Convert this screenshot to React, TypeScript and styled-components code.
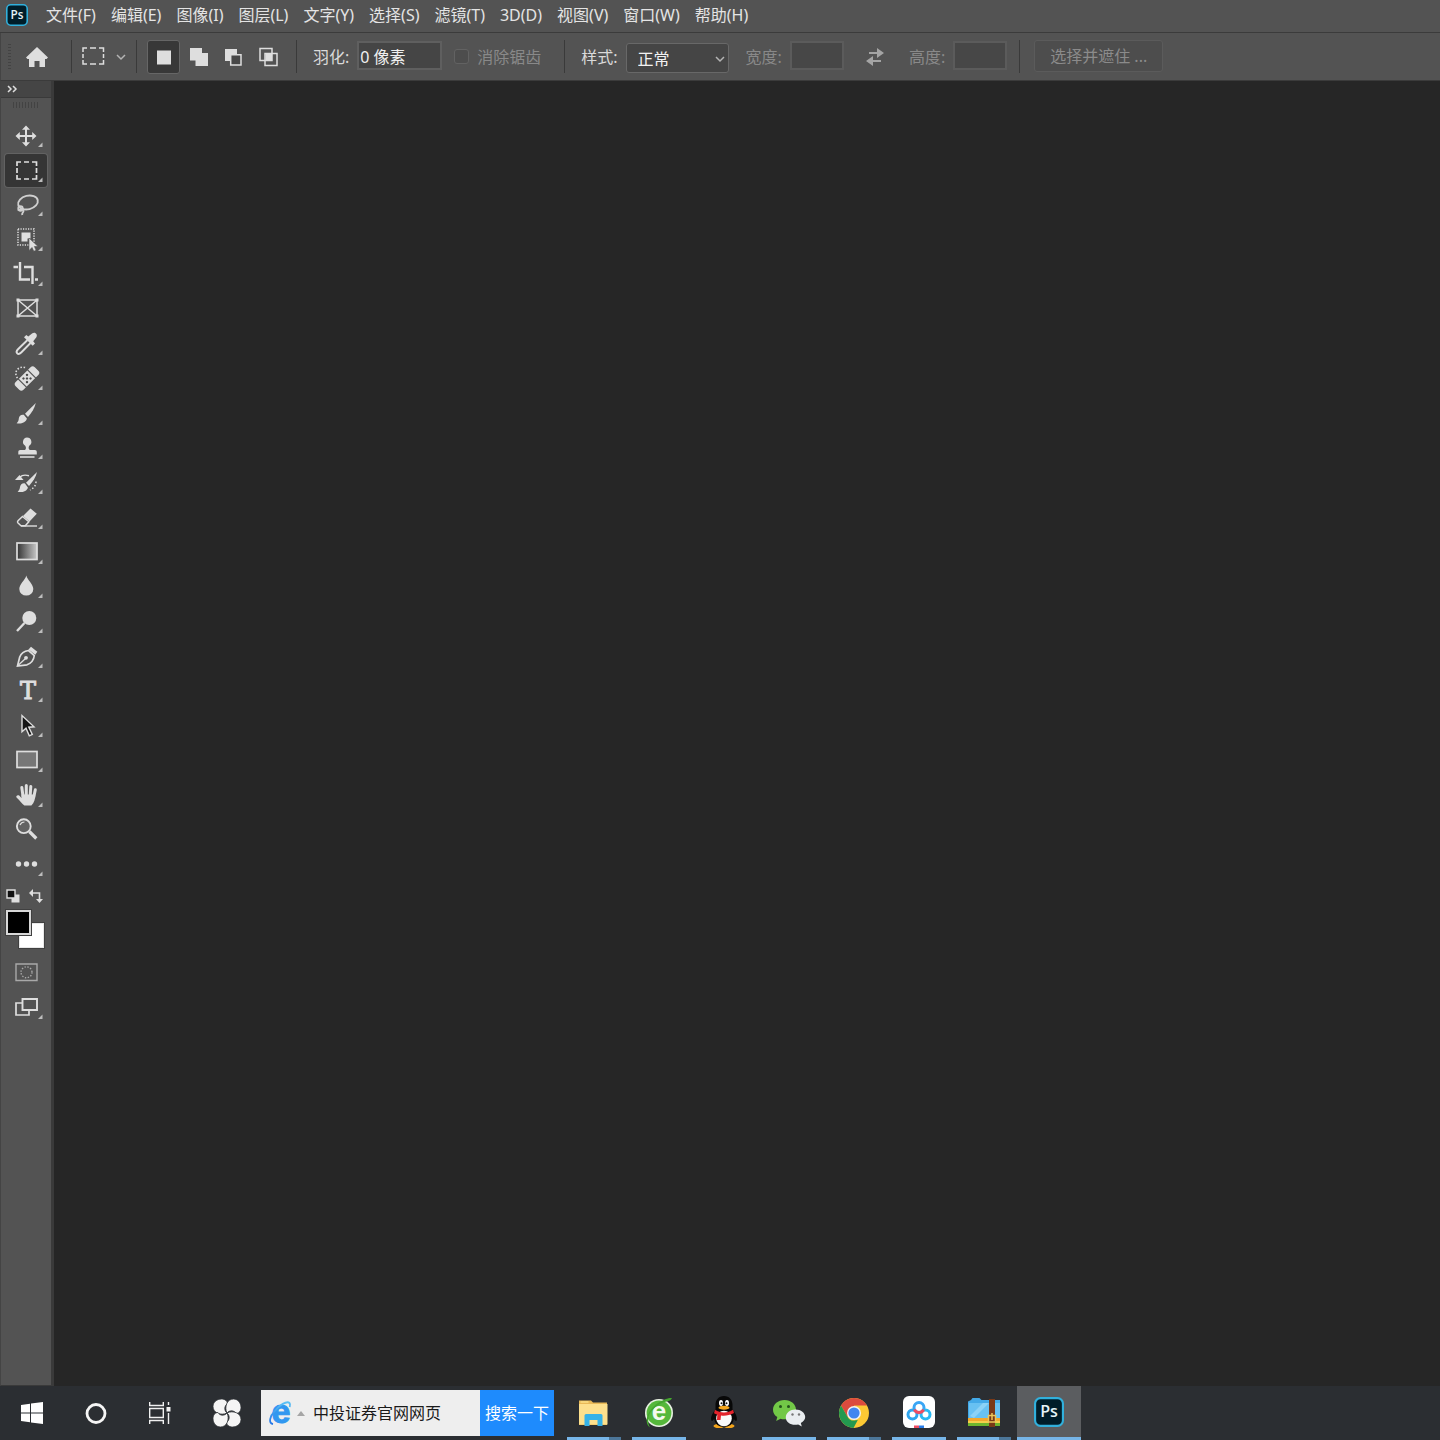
import React from "react";
import styled, { createGlobalStyle, css } from "styled-components";

const GlobalStyle = createGlobalStyle`
  *, *::before, *::after {
    box-sizing: border-box;
  }

  body {
    margin: 0;
    background: #262626;
  }

  body, button, input, select {
    font-family: "Noto Sans", "Noto Sans CJK SC", sans-serif;
    font-size: 16px;
  }

  button {
    padding: 0;
    border: 0;
    background: none;
    color: inherit;
  }

  svg {
    display: block;
    flex: none;
  }
`;

const Page = styled.div`
  min-height: 100vh;
  display: flex;
  flex-direction: column;
  color: #e4e4e4;
  user-select: none;
`;

const MenuBar = styled.nav`
  display: flex;
  align-items: center;
  gap: 15px;
  height: 33px;
  padding: 0 6px 2px;
  background: #535353;
  border-bottom: 1px solid #3b3b3b;
`;

const AppLogo = styled.div`
  display: flex;
  width: 25px;
`;

const MenuItem = styled.button`
  line-height: 24px;
  white-space: nowrap;
`;

const OptionsBar = styled.div`
  display: flex;
  align-items: center;
  height: 48px;
  padding-left: 7px;
  background: #535353;
  border-left: 1px solid #444444;
  border-bottom: 1px solid #3b3b3b;
`;

const Grip = styled.div<{ $wide?: boolean }>`
  flex: none;
  ${({ $wide }) =>
    $wide
      ? css`
          width: 27px;
          height: 6px;
          margin: 4px auto 10px;
          background: repeating-linear-gradient(to right, #434343 0 1px, #535353 1px 3px);
        `
      : css`
          width: 3px;
          height: 26px;
          background: repeating-linear-gradient(to bottom, #434343 0 1px, #535353 1px 3px);
        `}
`;

const Separator = styled.span`
  flex: none;
  width: 1px;
  height: 33px;
  background: #3a3a3a;
`;

const HomeButton = styled.button`
  display: flex;
  justify-content: center;
  width: 60px;
  padding-right: 8px;
`;

const PresetButton = styled.button`
  display: flex;
  align-items: center;
  gap: 11px;
  width: 64px;
  padding-left: 10px;
`;

const ModeGroup = styled.div`
  display: flex;
  gap: 2px;
  margin: 0 11px 0 10px;
`;

const ModeButton = styled.button<{ $active?: boolean }>`
  display: grid;
  place-items: center;
  width: 33px;
  height: 34px;
  border-radius: 3px;
  background: ${({ $active }) => ($active ? "#383838" : "transparent")};
  border: 1px solid ${({ $active }) => ($active ? "#666666" : "transparent")};
`;

const Field = styled.div<{ $dim?: boolean }>`
  display: flex;
  align-items: center;
  gap: 8px;
  margin-left: ${({ $dim }) => ($dim ? 17 : 16)}px;
  color: ${({ $dim }) => ($dim ? "#898989" : "#dadada")};

  label {
    line-height: 24px;
    white-space: nowrap;
  }
`;

const TextBox = styled.input<{ $width: number }>`
  width: ${({ $width }) => $width}px;
  height: 29px;
  margin-bottom: 2px;
  padding: 0 1px;
  border: 2px solid #5f5f5f;
  background: #454545;
  color: #f0f0f0;
  outline: none;

  &:disabled {
    background: #474747;
    border-color: #5b5b5b;
  }
`;

const CheckField = styled(Field)`
  margin: 0 23px 0 12px;
`;

const CheckBox = styled.input`
  appearance: none;
  width: 15px;
  height: 15px;
  margin: 0;
  border: 1px solid #626262;
  border-radius: 3px;
  background: #4d4d4d;
`;

const SelectWrap = styled.div`
  position: relative;
  width: 103px;
  padding-top: 2px;

  svg {
    position: absolute;
    right: 4px;
    top: 14px;
    pointer-events: none;
  }
`;

const Select = styled.select`
  appearance: none;
  width: 100%;
  height: 30px;
  padding: 2px 24px 0 11px;
  border: 1px solid #686868;
  border-radius: 3px;
  background: #454545;
  color: #f2f2f2;
`;

const SwapButton = styled.button`
  margin: 0 7px 0 21px;
`;

const MaskButton = styled.button`
  width: 129px;
  height: 32px;
  margin: 0 0 2px 14px;
  padding-bottom: 2px;
  border: 1px solid #5b5b5b;
  border-radius: 3px;
  background: #4d4d4d;
  color: #8b8b8b;
`;

const Workspace = styled.div`
  flex: 1;
  display: flex;
`;

const Sidebar = styled.aside`
  display: flex;
  flex-direction: column;
  flex: none;
  width: 54px;
  background: #535353;
  border-left: 1px solid #444444;
  border-right: 3px solid #3a3a3a;
  border-bottom: 1px solid #3a3a3a;
`;

const Expand = styled.button`
  display: flex;
  align-items: center;
  height: 17px;
  padding-left: 6px;
  background: #454545;
  border-bottom: 1px solid #3a3a3a;
`;

const ToolList = styled.div`
  display: grid;
  grid-template-rows: repeat(22, 1fr);
  align-items: center;
  justify-content: center;
  height: 764px;
`;

const ToolButton = styled.button<{ $active?: boolean }>`
  display: grid;
  place-items: center;
  width: 42px;
  height: 33px;
  border-radius: 3px;
  background: ${({ $active }) => ($active ? "#353535" : "transparent")};
  box-shadow: ${({ $active }) => ($active ? "0 0 0 1px #626262" : "none")};
`;

const ColorRow = styled.div`
  display: flex;
  justify-content: space-between;
  margin-top: 7px;
  padding: 0 8px 0 5px;
`;

const Swatches = styled.div`
  display: grid;
  grid-template-columns: 13px 12px 13px;
  grid-template-rows: 13px 12px 13px;
  margin: 7px 0 8px 5px;
`;

const Swatch = styled.button<{ $front?: boolean }>`
  grid-area: ${({ $front }) => ($front ? "1 / 1 / 3 / 3" : "2 / 2 / 4 / 4")};
  z-index: ${({ $front }) => ($front ? 1 : 0)};
  background: ${({ $front }) => ($front ? "#000000" : "#ffffff")};
  border: ${({ $front }) => ($front ? "2px solid #d8d8d8" : "1px solid #e8e8e8")};
  box-shadow: 0 0 0 1px #404040;
`;

const ModeStack = styled.div`
  display: flex;
  flex-direction: column;
  align-items: center;
  gap: 2px;
`;

const Canvas = styled.main`
  flex: 1;
  background: #262626;
`;

const TaskBar = styled.footer`
  display: flex;
  align-items: stretch;
  height: 54px;
  background: #2b2e32;
`;

const SystemButton = styled.button<{ $wide?: boolean }>`
  display: grid;
  place-items: center;
  width: ${({ $wide }) => ($wide ? 69 : 64)}px;
`;

const SearchBox = styled.form`
  display: flex;
  align-items: stretch;
  margin: 4px 8px 4px 0;
  width: 293px;
  background: #eeeeee;
`;

const SearchBrand = styled.div`
  display: flex;
  align-items: center;
  width: 52px;
  padding-left: 7px;
`;

const SearchInput = styled.input`
  flex: 1;
  min-width: 0;
  padding: 0 0 2px;
  border: 0;
  outline: none;
  background: none;
  color: #1a1a1a;
`;

const SearchButton = styled.button`
  width: 74px;
  padding-bottom: 2px;
  background: #1e8bfd;
  color: #ffffff;
`;

const TaskList = styled.div`
  display: flex;
  gap: 1px;
`;

const TaskButton = styled.button<{ $active?: boolean }>`
  display: flex;
  flex-direction: column;
  align-items: center;
  justify-content: flex-end;
  gap: 9px;
  width: 64px;
  background: ${({ $active }) => ($active ? "#5b5d60" : "transparent")};
`;

const TaskIcon = styled.span`
  display: grid;
  place-items: center;
  height: 32px;
`;

const bars = {
  none: "transparent",
  single: "#76b5e8",
  stacked: "linear-gradient(to right, #76b5e8 42px, #4c7699 42px)",
};

const RunningBar = styled.span<{ $kind: keyof typeof bars; $full?: boolean }>`
  width: ${({ $full }) => ($full ? 64 : 54)}px;
  height: 3px;
  background: ${({ $kind }) => bars[$kind]};
`;

const fg = "#dedede";

const menus = [
  "文件(F)",
  "编辑(E)",
  "图像(I)",
  "图层(L)",
  "文字(Y)",
  "选择(S)",
  "滤镜(T)",
  "3D(D)",
  "视图(V)",
  "窗口(W)",
  "帮助(H)",
];

function PsLogo({ size }: { size: number }) {
  return (
    <svg width={size} height={size} viewBox="0 0 28 28">
      <rect x="1" y="1" width="26" height="26" rx="5" fill="#001d29" stroke="#31b0dc" strokeWidth="2" />
      <text x="14" y="19" textAnchor="middle" fontFamily="Open Sans, sans-serif" fontSize="15" fontWeight="600" fill="#e5f3f8">
        Ps
      </text>
    </svg>
  );
}

function Chevron() {
  return (
    <svg width="10" height="8" viewBox="0 0 10 8" fill="none" stroke="#b4b4b4" strokeWidth="1.5">
      <path d="M1 2l4 4 4-4" />
    </svg>
  );
}

// Every tool is drawn on a 42x33 grid, the size of its button.
const tools: { name: string; flyout?: boolean; art: React.ReactNode }[] = [
  {
    name: "移动",
    flyout: true,
    art: (
      <>
        <path d="M21 8v18M12 17h18" stroke={fg} strokeWidth="2" />
        <path d="M21 6.500l4 4.300h-8zM21 27.500l4-4.300h-8zM10.500 17l4.300-4v8zM31.500 17l-4.300-4v8z" fill={fg} />
      </>
    ),
  },
  {
    name: "矩形选框",
    flyout: true,
    art: <path d="M12 12V8h4M19 8h5M27 8h4.500v4M31.500 14v5M31.500 21v4H27M24 25h-5M16 25h-4v-4M12 19v-5" fill="none" stroke={fg} strokeWidth="1.700" />,
  },
  {
    name: "套索",
    flyout: true,
    art: (
      <g fill="none" stroke="#cfcfcf" strokeWidth="1.900">
        <ellipse cx="23" cy="14.500" rx="10" ry="6.800" transform="rotate(-14 23 14.500)" />
        <circle cx="15.500" cy="20.500" r="2.200" />
        <path d="M13 21.500c2 2 6-2.500 5.500 1.500-.2 1.800-1.700 1.500-1.300 4" />
      </g>
    ),
  },
  {
    name: "对象选择",
    flyout: true,
    art: (
      <>
        <rect x="13" y="6" width="16" height="16" fill="none" stroke={fg} strokeWidth="1.500" strokeDasharray="1.200 1.300" />
        <path d="M16.500 9.500h9v6h-3v3h-6z" fill={fg} />
        <path d="M24 15v12.500l3-3 1.800 3.800 2.300-1-1.700-3.800H33z" fill={fg} stroke="#535353" strokeWidth=".600" />
      </>
    ),
  },
  {
    name: "裁剪",
    flyout: true,
    art: <path d="M8.500 9H13M15 4v17.500h10M19 9h8.500v17M30 21.500h3" fill="none" stroke={fg} strokeWidth="2.400" />,
  },
  {
    name: "图框",
    art: (
      <>
        <path d="M13 8h19v16H13zM13 8l19 16M32 8L13 24" fill="none" stroke={fg} strokeWidth="1.500" />
        <path d="M11.500 6.500h3v3h-3zM30.500 6.500h3v3h-3zM11.500 22.500h3v3h-3zM30.500 22.500h3v3h-3z" fill={fg} />
      </>
    ),
  },
  {
    name: "吸管",
    flyout: true,
    art: (
      <>
        <path d="M22.500 13L13 22.300c-1.200 1.200-1.800 3-.8 4s2.800.4 4-.8L25.500 16" fill="none" stroke={fg} strokeWidth="1.900" />
        <path d="M19 10.200l2.300-2.300 2 1.600L27 6.600c3-2.400 6.300 1 4.200 4L28.200 14.200l1.800 2.200-2.300 2.300z" fill={fg} />
      </>
    ),
  },
  {
    name: "修复画笔",
    flyout: true,
    art: (
      <>
        <path d="M12.500 16a7 7 0 0 1-1.500-6 7 7 0 0 1 10-4" fill="none" stroke={fg} strokeWidth="1.600" strokeDasharray="1.500 1.700" />
        <g transform="rotate(-45 22 16.500)">
          <rect x="8.500" y="11" width="27" height="11" rx="3" fill={fg} />
          <path d="M15.500 10.500v12M28.500 10.500v12" stroke="#535353" strokeWidth="1.200" />
          <g fill="#4b4b4b">
            <circle cx="19.500" cy="14" r="1.200" />
            <circle cx="24.500" cy="14" r="1.200" />
            <circle cx="19.500" cy="19" r="1.200" />
            <circle cx="24.500" cy="19" r="1.200" />
            <circle cx="22" cy="16.500" r="1.200" />
          </g>
        </g>
      </>
    ),
  },
  {
    name: "画笔",
    flyout: true,
    art: (
      <>
        <path d="M30.800 6L20 16.700l3 3.300C26.500 16 29.700 11 30.800 6z" fill={fg} />
        <path d="M18.800 17.800c-2.600-.6-4.700 1-5 3.700-.1 2-.8 3.500-2.200 4.800 4 1 9.400-.5 10.300-4.700z" fill={fg} />
      </>
    ),
  },
  {
    name: "仿制图章",
    flyout: true,
    art: (
      <>
        <path d="M22 6.500a4.400 4.400 0 0 1 2.200 8.200c-1 1.700-.6 3.300.6 4.300h5c1.400 0 2 .7 2 2v2.500H13.300V21c0-1.300.6-2 2-2H20c1-1 1.400-2.600.2-4.300A4.400 4.400 0 0 1 22 6.500z" fill={fg} />
        <path d="M15 26h14.500" stroke={fg} strokeWidth="1.600" />
      </>
    ),
  },
  {
    name: "历史记录画笔",
    flyout: true,
    art: (
      <>
        <path d="M32 6L21 16.700l3 3.300C27.500 16 31 11 32 6z" fill={fg} />
        <path d="M20 17.500c-2.600-.6-4.500 1-5 3.500-.2 2-1 3.500-2.400 4.800 4 1 9.400-.3 10.300-4.400z" fill={fg} />
        <path d="M10 14l4.500-5 4 5z" fill={fg} />
        <path d="M15 11c2-2 5-2.300 9-1.300" fill="none" stroke={fg} strokeWidth="1.400" />
        <path d="M31 15.500c0 4-2.500 7-6 8.500" fill="none" stroke={fg} strokeWidth="1.500" strokeDasharray="1.500 2" />
      </>
    ),
  },
  {
    name: "橡皮擦",
    flyout: true,
    art: (
      <>
        <path d="M25.500 7.500l6.300 5.300-7.300 7.700-6.500-5.500z" fill={fg} />
        <path d="M17.500 15.500l6.300 5.300-3.500 4H16l-3-2.800c-.6-.6-.6-1.500 0-2.200z" fill="none" stroke={fg} strokeWidth="1.500" />
        <path d="M16 25h16" stroke={fg} strokeWidth="1.400" />
      </>
    ),
  },
  {
    name: "渐变",
    flyout: true,
    art: (
      <>
        <defs>
          <linearGradient id="tool-gradient">
            <stop offset="0" stopColor="#333333" />
            <stop offset="1" stopColor="#c8c8c8" />
          </linearGradient>
        </defs>
        <rect x="12" y="7" width="20" height="16.500" fill="url(#tool-gradient)" stroke={fg} strokeWidth="1.700" />
      </>
    ),
  },
  {
    name: "模糊",
    flyout: true,
    art: <path d="M21.300 5.500c1 4.500 7 8.500 7 13.500a7 6.600 0 0 1-14 0c0-5 6-9 7-13.500z" fill={fg} />,
  },
  {
    name: "减淡",
    flyout: true,
    art: (
      <>
        <circle cx="24.300" cy="13" r="7" fill={fg} />
        <path d="M19.500 18L12 26" stroke={fg} strokeWidth="2.400" />
      </>
    ),
  },
  {
    name: "钢笔",
    flyout: true,
    art: (
      <>
        <path d="M26 6.800l6.300 5-2 3-6.800-5.300z" fill={fg} />
        <path d="M23.500 10.500c-4 .5-7.500 3-8.800 6.500L12.500 26l9.500-1.200c4-1.500 6.800-5 7.300-9.300z" fill="none" stroke={fg} strokeWidth="1.700" />
        <path d="M13 25.500l7.500-7" stroke={fg} strokeWidth="1.300" />
        <circle cx="21" cy="17.800" r="1.900" fill={fg} />
      </>
    ),
  },
  {
    name: "横排文字",
    flyout: true,
    art: (
      <text x="23" y="25" textAnchor="middle" fontFamily="DejaVu Serif, serif" fontSize="24" fill={fg} stroke={fg} strokeWidth="1">
        T
      </text>
    ),
  },
  {
    name: "路径选择",
    flyout: true,
    art: <path d="M17 6.500v16.300l4-3.600 3.300 7.600 3-1.300-3.500-7.300 5.200-.4z" fill="#161616" stroke={fg} strokeWidth="1.400" />,
  },
  {
    name: "矩形",
    flyout: true,
    art: <rect x="12" y="7.500" width="20" height="16" fill="#777777" stroke={fg} strokeWidth="1.700" />,
  },
  {
    name: "抓手",
    flyout: true,
    art: (
      <>
        <path d="M18 17L16.800 8.500M21.300 16V6.500M25.200 16.500l.6-9M28.800 18l1.500-7.200" stroke={fg} strokeWidth="3" strokeLinecap="round" />
        <path d="M16.500 15.500h13.700c.3 4-1 8.500-3.800 11h-7c-2.500-1.500-4.500-5-7.900-8-.9-1.600 1-2.800 2.700-1.900l2.300 2.400z" fill={fg} />
      </>
    ),
  },
  {
    name: "缩放",
    art: (
      <>
        <circle cx="18.800" cy="13.200" r="6.900" fill="#636363" stroke={fg} strokeWidth="1.900" />
        <path d="M15 12c.8-2 2.500-3 4.500-3" fill="none" stroke={fg} strokeWidth="1.200" />
        <path d="M24.300 18.500l7 7" stroke={fg} strokeWidth="3.200" />
      </>
    ),
  },
  {
    name: "编辑工具栏",
    flyout: true,
    art: (
      <g fill={fg}>
        <circle cx="13.500" cy="16" r="2.700" />
        <circle cx="21.500" cy="16" r="2.700" />
        <circle cx="29.500" cy="16" r="2.700" />
      </g>
    ),
  },
];

function ToolArt({ flyout, children }: { flyout?: boolean; children: React.ReactNode }) {
  return (
    <svg width="42" height="33" viewBox="0 0 42 33">
      {children}
      {flyout && <path d="M37.500 23.500v4.500H33z" fill="#bdbdbd" />}
    </svg>
  );
}

function ExplorerIcon() {
  return (
    <svg width="32" height="32" viewBox="0 0 32 32">
      <path d="M1 4.500h12l2 2h14V29H1z" fill="#e9b957" />
      <path d="M1 8h28.500v20.500H1z" fill="#fde08d" />
      <path d="M2.500 5h8v2h-8z" fill="#f7d67a" />
      <path d="M6.500 19.500q0-1.500 1.500-1.500h15q1.500 0 1.500 1.500V30h-5v-6h-8v6h-5z" fill="#36b2e8" />
    </svg>
  );
}

function GreenBrowserIcon() {
  return (
    <svg width="32" height="32" viewBox="0 0 32 32">
      <circle cx="16" cy="17" r="14" fill="#e8f2e2" />
      <circle cx="16" cy="17" r="12.400" fill="#55b83b" />
      <text x="16" y="24" textAnchor="middle" fontFamily="Liberation Sans, sans-serif" fontWeight="700" fontSize="26" fill="#f4faef">
        e
      </text>
      <path d="M7 31.500C1 28 3 16 13 8.500 19 4 25 1.500 29 2c-1 2.500-3 3-5.500 3.500C16 7 7 14 5.500 21c-.8 4 0 8 1.500 10.500z" fill="#45a62f" />
    </svg>
  );
}

function QqIcon() {
  return (
    <svg width="32" height="32" viewBox="0 0 32 32">
      <ellipse cx="11" cy="30" rx="5.500" ry="2.200" fill="#f4a51c" />
      <ellipse cx="21" cy="30" rx="5.500" ry="2.200" fill="#f4a51c" />
      <path d="M16 0c5.500 0 8.500 4 8.500 9v4.500c2.500 3 5 7 4.300 10.500-.3 1.500-1.500 1-3-1C25.300 28 21 31 16 31S6.700 28 6.200 23c-1.500 2-2.700 2.500-3 1C2.500 20.500 5 16.500 7.500 13.500V9C7.500 4 10.500 0 16 0z" fill="#080808" />
      <ellipse cx="16" cy="22.500" rx="7.800" ry="7.800" fill="#fafafa" />
      <ellipse cx="13" cy="7" rx="2" ry="2.900" fill="#fff" />
      <ellipse cx="19" cy="7" rx="2" ry="2.900" fill="#fff" />
      <circle cx="13.500" cy="7.300" r="1" fill="#111" />
      <circle cx="18.500" cy="7.300" r="1" fill="#111" />
      <ellipse cx="16" cy="11.700" rx="5.500" ry="2" fill="#f4a51c" />
      <path d="M7 13.800c5.500 3.500 12.500 3.500 18 0l1 3.200c-4.500 2.500-9 3-13 2.500l-.5 4.500H9l.3-5.300L6 17.200z" fill="#e3232c" />
    </svg>
  );
}

function WechatIcon() {
  return (
    <svg width="34" height="32" viewBox="0 0 34 32">
      <path d="M12.500 4C6 4 1 8.300 1 13.700c0 3 1.600 5.600 4.300 7.400L4.200 25l4.300-2.300c5 1.500 15.500.5 15.500-9C24 8.300 19 4 12.500 4z" fill="#72c847" />
      <path d="M23.500 13.500c-5.500 0-9.700 3.500-9.700 7.700 0 5.800 6.500 8.800 12.400 7.200l3.600 2-1-3.300c2.800-1.600 4.400-3.800 4.400-6 0-4.200-4.200-7.600-9.700-7.600z" fill="#e9edf0" />
      <g fill="#24541c">
        <circle cx="8.500" cy="10.500" r="1.500" />
        <circle cx="16.500" cy="10.500" r="1.500" />
      </g>
      <g fill="#777">
        <circle cx="20.500" cy="18.500" r="1.200" />
        <circle cx="27" cy="18.500" r="1.200" />
      </g>
    </svg>
  );
}

function ChromeIcon() {
  return (
    <svg width="32" height="32" viewBox="0 0 32 32">
      <circle cx="16" cy="17" r="15" fill="#fcc934" />
      <path d="M16 17L9.500 20.700 3 9.500A15 15 0 0 1 29 9.500H16z" fill="#dc4b3e" />
      <path d="M3 9.500L9.500 20.700a7.500 7.500 0 0 0 8.300 3.600l2-.4L15.500 32A15 15 0 0 1 3 9.500z" fill="#23994f" />
      <circle cx="16" cy="17" r="7" fill="#f3f3f3" />
      <circle cx="16" cy="17" r="5.600" fill="#4286ef" />
    </svg>
  );
}

function NetdiskIcon() {
  return (
    <svg width="32" height="32" viewBox="0 0 32 32">
      <rect width="32" height="32" rx="6" fill="#ffffff" />
      <g fill="none" strokeWidth="3">
        <circle cx="16" cy="11.500" r="5" stroke="#3aa6f5" />
        <circle cx="9.500" cy="18.500" r="4.500" stroke="#2fa4ee" />
        <circle cx="22.500" cy="18.500" r="4.500" stroke="#29b8f2" />
        <path d="M11.500 13.500c1.500 4 7.500 4 9 0" stroke="#ee4d63" />
      </g>
      <path d="M11 29.500h5V32h-5z" fill="#ee4d63" />
      <path d="M16 29.500h5V32h-5z" fill="#277ce8" />
    </svg>
  );
}

function ArchiveIcon() {
  return (
    <svg width="34" height="32" viewBox="0 0 34 32">
      <path d="M1 5.500L4 4l1.500-2h7L14.500 4H33v19H1z" fill="#43a9e8" />
      <path d="M2 7h31v15H2z" fill="#68c1f2" />
      <path d="M3 20L16 7h6L7 22z" fill="#8cd2f6" />
      <path d="M1 22h32v3H1z" fill="#f3a72d" />
      <path d="M1 25h32v2H1z" fill="#f4d04b" />
      <path d="M1 27h32v3H1z" fill="#6eb52e" />
      <path d="M22 3h6v28h-6z" fill="#7a3917" />
      <path d="M21.500 19.500h7V26h-7zM25 17v7" fill="none" stroke="#ecc659" strokeWidth="1.500" />
    </svg>
  );
}

const tasks: { name: string; bar: keyof typeof bars; icon: React.ReactNode; active?: boolean }[] = [
  { name: "文件资源管理器", bar: "stacked", icon: <ExplorerIcon /> },
  { name: "浏览器", bar: "single", icon: <GreenBrowserIcon /> },
  { name: "QQ", bar: "none", icon: <QqIcon /> },
  { name: "微信", bar: "single", icon: <WechatIcon /> },
  { name: "Chrome", bar: "stacked", icon: <ChromeIcon /> },
  { name: "网盘", bar: "single", icon: <NetdiskIcon /> },
  { name: "压缩", bar: "stacked", icon: <ArchiveIcon /> },
  { name: "Photoshop", bar: "single", icon: <PsLogo size={30} />, active: true },
];

function Options() {
  return (
    <OptionsBar>
      <Grip />
      <HomeButton aria-label="主页">
        <svg width="22" height="20" viewBox="0 0 22 20">
          <path d="M11 0l11 10.500-1.500 1.500H19v8h-5.500v-6h-5v6H3v-8H1.500L0 10.500z" fill={fg} />
        </svg>
      </HomeButton>
      <Separator />
      <PresetButton aria-label="工具预设">
        <svg width="23" height="20" viewBox="0 0 23 20">
          <path d="M1 5V1h4M8 1h6M17 1h4.500v4M21.500 7v4M21.500 13v4H17M14 17H8M5 17H1v-4M1 11V7" fill="none" stroke={fg} strokeWidth="1.500" />
        </svg>
        <Chevron />
      </PresetButton>
      <Separator />
      <ModeGroup>
        <ModeButton $active aria-label="新选区">
          <svg width="20" height="20">
            <path d="M3 3.500h14v14H3z" fill={fg} />
          </svg>
        </ModeButton>
        <ModeButton aria-label="添加到选区">
          <svg width="20" height="20">
            <path d="M1 1h12v5h6v13H6.500v-5.500H1z" fill={fg} />
          </svg>
        </ModeButton>
        <ModeButton aria-label="从选区减去">
          <svg width="20" height="20">
            <path d="M1 2h12v5H6v7H1z" fill={fg} />
            <path d="M6.700 7.700H17V18H6.700z" fill="#484848" stroke={fg} strokeWidth="1.500" />
          </svg>
        </ModeButton>
        <ModeButton aria-label="与选区交叉">
          <svg width="20" height="20">
            <path d="M6.500 7H13v6.500H6.500z" fill={fg} />
            <path d="M1 1.500h12v12H1zM6 6.500h12v12H6z" fill="none" stroke={fg} strokeWidth="1.500" />
          </svg>
        </ModeButton>
      </ModeGroup>
      <Separator />
      <Field>
        <label htmlFor="feather">羽化:</label>
        <TextBox id="feather" $width={85} defaultValue="0 像素" />
      </Field>
      <CheckField $dim>
        <CheckBox id="antialias" type="checkbox" disabled />
        <label htmlFor="antialias">消除锯齿</label>
      </CheckField>
      <Separator />
      <Field>
        <label htmlFor="style">样式:</label>
        <SelectWrap>
          <Select id="style" defaultValue="正常">
            <option>正常</option>
          </Select>
          <Chevron />
        </SelectWrap>
      </Field>
      <Field $dim>
        <label htmlFor="width">宽度:</label>
        <TextBox id="width" $width={54} disabled />
      </Field>
      <SwapButton aria-label="互换宽度和高度">
        <svg width="20" height="18" viewBox="0 0 20 18">
          <path d="M4 5h9M7 13h9" stroke="#a4a4a4" strokeWidth="2" />
          <path d="M12 0l7 5-7 5zM8 8l-7 5 7 5z" fill="#a4a4a4" />
        </svg>
      </SwapButton>
      <Field $dim>
        <label htmlFor="height">高度:</label>
        <TextBox id="height" $width={54} disabled />
      </Field>
      <ModeEnd />
      <MaskButton disabled>选择并遮住 ...</MaskButton>
    </OptionsBar>
  );
}

const ModeEnd = styled(Separator)`
  margin-left: 12px;
`;

function Toolbox() {
  return (
    <Sidebar>
      <Expand aria-label="展开面板">
        <svg width="11" height="8" viewBox="0 0 11 8" fill="none" stroke={fg} strokeWidth="1.500">
          <path d="M1 1l3 3-3 3M6 1l3 3-3 3" />
        </svg>
      </Expand>
      <Grip $wide />
      <ToolList>
        {tools.map((tool, i) => (
          <ToolButton key={tool.name} $active={i === 1} aria-label={tool.name}>
            <ToolArt flyout={tool.flyout}>{tool.art}</ToolArt>
          </ToolButton>
        ))}
      </ToolList>
      <ColorRow>
        <button aria-label="默认颜色">
          <svg width="14" height="14">
            <path d="M5.500 5.500h8v8h-8z" fill={fg} />
            <path d="M1 1h8v8H1z" fill="#111" stroke={fg} strokeWidth="1.400" />
          </svg>
        </button>
        <button aria-label="切换颜色">
          <svg width="14" height="14">
            <path d="M3 4h7.500v7" fill="none" stroke={fg} strokeWidth="1.600" />
            <path d="M0 4l4-4v8zM10.500 14l-3.500-4h7z" fill={fg} />
          </svg>
        </button>
      </ColorRow>
      <Swatches>
        <Swatch $front aria-label="前景色" />
        <Swatch aria-label="背景色" />
      </Swatches>
      <ModeStack>
        <ToolButton aria-label="快速蒙版">
          <ToolArt>
            <g fill="none" stroke="#a9a9a9" strokeWidth="1.400">
              <path d="M11 8h21v16.500H11z" />
              <circle cx="21.500" cy="16.300" r="5.500" strokeDasharray="1.400 1.500" />
            </g>
          </ToolArt>
        </ToolButton>
        <ToolButton aria-label="屏幕模式">
          <ToolArt flyout>
            <path d="M11 12h13v12H11z" fill="none" stroke={fg} strokeWidth="1.700" />
            <path d="M17.500 8h14.500v11H17.500z" fill="#535353" stroke={fg} strokeWidth="1.900" />
          </ToolArt>
        </ToolButton>
      </ModeStack>
    </Sidebar>
  );
}

function WindowsTaskBar() {
  return (
    <TaskBar>
      <SystemButton aria-label="开始">
        <svg width="22" height="22" viewBox="0 0 22 22">
          <path d="M0 3l9-1.300v8.800H0zM10 1.600L22 0v10.500H10zM0 11.500h9v8.800L0 19zM10 11.500h12V22l-12-1.600z" fill="#fff" />
        </svg>
      </SystemButton>
      <SystemButton aria-label="Cortana">
        <svg width="22" height="22">
          <circle cx="11" cy="11.500" r="9" fill="none" stroke="#f5f5f5" strokeWidth="2.800" />
        </svg>
      </SystemButton>
      <SystemButton aria-label="任务视图">
        <svg width="22" height="22" fill="none" stroke="#f0f0f0" strokeWidth="1.400">
          <path d="M.7 0v3.500h13.600V0M.7 6.500h13.600v9H.7zM.7 22v-3.500h13.600V22M19.500 0v3M19.500 11v11" />
          <path d="M17.500 5h4v4.500h-4z" fill="#f0f0f0" stroke="none" />
        </svg>
      </SystemButton>
      <SystemButton $wide aria-label="助手">
        <svg width="28" height="28" viewBox="0 0 28 28">
          <g fill="#f5f5f5" stroke="#2b2e32" strokeWidth=".8">
            {[0, 90, 180, 270].map((angle) => (
              <path
                key={angle}
                d="M14 14C8 17 0 14 0 7.500 0 3 4 0 8.500 0c4 0 6 2.500 6 5C11 7 11 11.500 14 14z"
                transform={`rotate(${angle} 14 14)`}
              />
            ))}
          </g>
        </svg>
      </SystemButton>
      <SearchBox onSubmit={(e) => e.preventDefault()}>
        <SearchBrand>
          <svg width="40" height="42" viewBox="0 0 40 42">
            <defs>
              <linearGradient id="ie" x2="0" y2="1">
                <stop offset="0" stopColor="#5bc2f5" />
                <stop offset="1" stopColor="#2173e6" />
              </linearGradient>
            </defs>
            <text
              x="13"
              y="31"
              textAnchor="middle"
              fontFamily="Liberation Sans, sans-serif"
              fontWeight="700"
              fontSize="34"
              fill="#3197f0"
              stroke="#3197f0"
              strokeWidth="1"
            >
              e
            </text>
            <path d="M5 32c-5-1-3-8 1.500-12.500C11 13 19 8.500 21.500 11c1 1 .7 2.500.2 4" fill="none" stroke="url(#ie)" strokeWidth="1.800" />
            <path d="M29 24l4-5 4 5z" fill="#a5a5a5" />
          </svg>
        </SearchBrand>
        <SearchInput aria-label="搜索" defaultValue="中投证券官网网页" />
        <SearchButton type="submit">搜索一下</SearchButton>
      </SearchBox>
      <TaskList>
        {tasks.map((task) => (
          <TaskButton key={task.name} $active={task.active} aria-label={task.name}>
            <TaskIcon>{task.icon}</TaskIcon>
            <RunningBar $kind={task.bar} $full={task.active} />
          </TaskButton>
        ))}
      </TaskList>
    </TaskBar>
  );
}

export default function App() {
  return (
    <Page>
      <GlobalStyle />
      <MenuBar>
        <AppLogo>
          <PsLogo size={22} />
        </AppLogo>
        {menus.map((label) => (
          <MenuItem key={label}>{label}</MenuItem>
        ))}
      </MenuBar>
      <Options />
      <Workspace>
        <Toolbox />
        <Canvas />
      </Workspace>
      <WindowsTaskBar />
    </Page>
  );
}
